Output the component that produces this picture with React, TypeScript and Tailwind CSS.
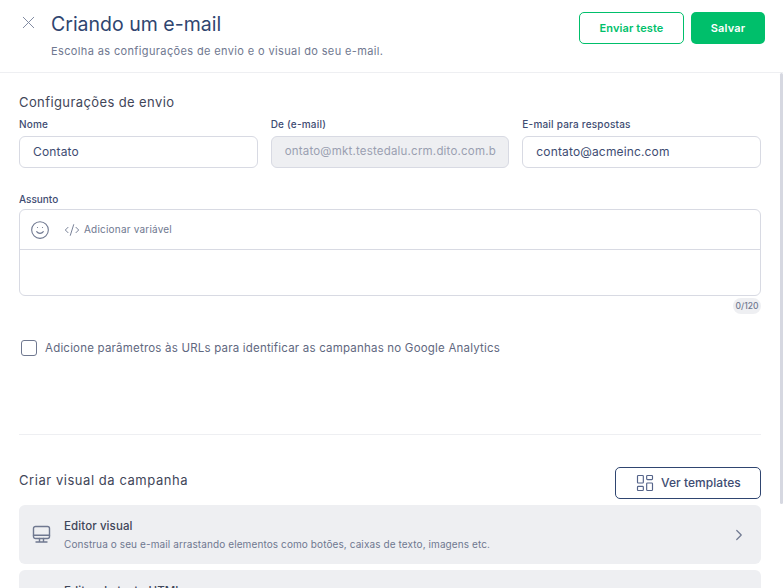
import { ChevronRight, CodeXml, LayoutDashboard, Smile, X } from "lucide-react";

const font = "font-['Inter','Noto_Sans',sans-serif]";

function Field({ label, value, disabled }: { label: string; value: string; disabled?: boolean }) {
  return (
    <div className="flex flex-col">
      <label className="mb-[5px] text-[10px] leading-[14px] font-medium tracking-[0.2px] text-[#3e4c72]">{label}</label>
      <div
        className={
          disabled
            ? "flex h-[32px] items-center overflow-hidden rounded-[6px] border border-[#d8dae3] bg-[#eeeff2] px-[13px] text-[11.5px] tracking-[0.2px] whitespace-nowrap text-[#9a9fb1]"
            : "flex h-[32px] items-center rounded-[6px] border border-[#d8dae3] bg-white px-[13px] text-[12px] tracking-[0.15px] text-[#3e4c72]"
        }
      >
        {value}
      </div>
    </div>
  );
}

export default function App() {
  return (
    <div className={`${font} relative flex h-[588px] w-[783px] flex-col overflow-hidden bg-white`}>
      <header className="flex h-[73px] shrink-0 items-start justify-between border-b border-[#eeeff2] pt-[12px] pr-[18px] pl-[18px]">
        <div className="flex items-start">
          <X size={21} strokeWidth={1.1} className="text-[#7d869e]" />
          <div className="ml-[12px]">
            <h1 className="text-[19.5px] leading-[24px] font-normal text-[#2f4570]">Criando um e-mail</h1>
            <p className="mt-[8px] text-[11px] leading-[14px] tracking-[0.37px] text-[#6f7890]">
              Escolha as configurações de envio e o visual do seu e-mail.
            </p>
          </div>
        </div>
        <div className="flex gap-[7px]">
          <button className="flex h-[32px] w-[105px] items-center justify-center rounded-[5px] border border-[#00bf6b] bg-white text-[11px] font-semibold tracking-[0.1px] text-[#00bf6b]">
            Enviar teste
          </button>
          <button className="flex h-[32px] w-[74px] items-center justify-center rounded-[5px] bg-[#00bf6b] text-[11px] font-semibold tracking-[0.2px] text-white">
            Salvar
          </button>
        </div>
      </header>

      <main className="flex-1 pt-[21px] pr-[22px] pl-[19px]">
        <h2 className="text-[13px] leading-[17px] tracking-[0.4px] text-[#3f4659]">Configurações de envio</h2>
        <div className="mt-[6px] grid grid-cols-3 gap-[13px]">
          <Field label="Nome" value="Contato" />
          <Field label="De (e-mail)" value="ontato@mkt.testedalu.crm.dito.com.b" disabled />
          <Field label="E-mail para respostas" value="contato@acmeinc.com" />
        </div>

        <label className="mt-[24px] block text-[10px] leading-[14px] font-medium text-[#3e4c72]">Assunto</label>
        <div className="mt-[3px] rounded-[6px] border border-[#d8dae3]">
          <div className="flex h-[40px] items-center border-b border-[#d8dae3] pl-[10px] text-[#6f7890]">
            <Smile size={20} strokeWidth={1.3} />
            <CodeXml size={16} strokeWidth={1.4} className="ml-[14px]" />
            <span className="ml-[4px] text-[10px] tracking-[0.2px]">Adicionar variável</span>
          </div>
          <div className="h-[45px]" />
        </div>
        <div className="mt-[2px] flex justify-end">
          <span className="flex h-[16px] w-[28px] items-center justify-center rounded-full bg-[#eeeff2] text-[8.5px] font-medium text-[#6f7890]">
            0/120
          </span>
        </div>

        <div className="mt-[26px] flex items-center pl-[2px]">
          <span className="h-[16px] w-[16px] rounded-[3px] border-[1.5px] border-[#6f7890]" />
          <span className="ml-[8px] text-[11.5px] leading-[16px] tracking-[0.2px] text-[#5f6880]">
            Adicione parâmetros às URLs para identificar as campanhas no Google Analytics
          </span>
        </div>

        <div className="mt-[78px] border-t border-[#eeeff2]" />

        <div className="mt-[32px] flex items-start justify-between">
          <h2 className="mt-[5px] text-[13px] leading-[17px] tracking-[0.55px] text-[#3f4659]">Criar visual da campanha</h2>
          <button className="flex h-[32px] w-[146px] items-center rounded-[5px] border border-[#2f4570] pl-[19px] text-[12px] font-medium tracking-[0.05px] text-[#3e4c72]">
            <LayoutDashboard size={20} strokeWidth={1.4} className="mr-[6px] text-[#55648a]" />
            Ver templates
          </button>
        </div>

        <div className="mt-[6px] flex h-[59px] items-center rounded-[6px] bg-[#eeeff2] pr-[13px] pl-[13px]">
          {/* monitor com base, nao existe igual no lucide */}
          <svg width="19" height="19" viewBox="0 0 19 19" fill="none" stroke="#6f7890" strokeWidth="1.4" strokeLinecap="round">
            <rect x="1.5" y="1.5" width="16" height="12" rx="2" />
            <path d="M1.5 10.2h16M7.5 13.5v3M11.5 13.5v3M4 17h11" />
          </svg>
          <div className="ml-[13px] flex-1 pb-[1px]">
            <div className="text-[11.5px] leading-[16px] font-medium tracking-[0.1px] text-[#3f4659]">Editor visual</div>
            <div className="mt-[3px] text-[10px] leading-[14px] tracking-[0.1px] text-[#6f7890]">
              Construa o seu e-mail arrastando elementos como botões, caixas de texto, imagens etc.
            </div>
          </div>
          <ChevronRight size={18} strokeWidth={1.6} className="text-[#6f7890]" />
        </div>

        <div className="mt-[6px] flex h-[59px] items-start rounded-[6px] bg-[#eeeff2] pt-[13px] pl-[45px]">
          <div className="text-[11.5px] leading-[16px] font-medium tracking-[0.1px] text-[#3f4659]">Editor de texto HTML</div>
        </div>
      </main>

      <div className="absolute top-[73px] right-0 h-[431px] w-[3px] rounded-full bg-[#d6d8e1]" />
    </div>
  );
}
